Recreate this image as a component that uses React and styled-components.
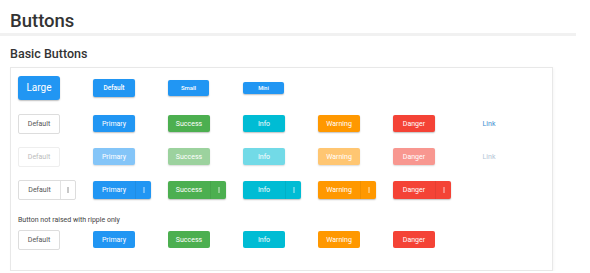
import React from 'react';
import styled, { createGlobalStyle, css } from 'styled-components';

const GlobalStyle = createGlobalStyle`
  body {
    margin: 0;
    background: #fff;
    font-family: Roboto, "Liberation Sans", sans-serif;
  }
`;

const colors = {
  primary: '#2196f3',
  success: '#4caf50',
  info: '#00bcd4',
  warning: '#ff9800',
  danger: '#f44336',
};

const sizes = {
  large: { w: 42, h: 24, fs: 10, r: 3, fw: 400 },
  normal: { w: 42, h: 18, fs: 6.5, r: 2, fw: 500 },
  small: { w: 41, h: 16, fs: 6, r: 2, fw: 500 },
  mini: { w: 41, h: 12, fs: 5.5, r: 2, fw: 500 },
  base: { w: 42, h: 17, fs: 7, r: 2, fw: 400 },
};

const Page = styled.div`
  width: 576px;
`;

const Title = styled.h1`
  margin: 12px 0 0;
  padding: 0 0 2px 10px;
  font-size: 18.5px;
  line-height: 19px;
  font-weight: 500;
  color: #333;
  border-bottom: 3px solid #f1f1f1;
`;

const SectionTitle = styled.h2`
  margin: 12px 0 0 10px;
  font-size: 12.5px;
  line-height: 12.5px;
  font-weight: 500;
  color: #333;
`;

const Panel = styled.div`
  margin: 6px 0 0 10px;
  width: 543px;
  height: 204px;
  box-sizing: border-box;
  border: 1px solid #e8e8e8;
  box-shadow: 1px 1px 3px rgba(0, 0, 0, 0.04);
  padding: 8px 0 0 7px;
  display: flex;
  flex-direction: column;
  gap: 14px;
`;

const Row = styled.div`
  display: grid;
  grid-template-columns: repeat(7, 75px);
  align-items: center;
  height: ${(p) => p.$h || 19}px;
`;

const Group = styled.div`
  display: flex;
  flex-direction: column;
  gap: 5px;
  margin-top: 3px;
`;

const Caption = styled.div`
  font-size: 7px;
  line-height: 9px;
  color: #444;
`;

const Btn = styled.button`
  box-sizing: border-box;
  width: ${(p) => sizes[p.$size].w}px;
  height: ${(p) => sizes[p.$size].h}px;
  font-family: Roboto, "Liberation Sans", sans-serif;
  font-size: ${(p) => sizes[p.$size].fs}px;
  font-weight: ${(p) => sizes[p.$size].fw};
  border-radius: ${(p) => sizes[p.$size].r}px;
  padding: 0;
  border: none;
  display: flex;
  align-items: center;
  justify-content: center;
  color: #fff;
  background: ${(p) => colors[p.$variant]};
  opacity: ${(p) => (p.$off ? 0.55 : 1)};
  box-shadow: ${(p) => (p.$flat ? 'none' : '0 1px 1.5px rgba(0,0,0,0.25)')};
`;

const OutlineBtn = styled.button`
  box-sizing: border-box;
  width: 42px;
  height: 20px;
  padding: 0;
  font-family: Roboto, "Liberation Sans", sans-serif;
  font-size: 7px;
  background: #fff;
  border: 1px solid ${(p) => (p.$off ? '#eeeeee' : '#dddddd')};
  border-radius: 2px;
  color: ${(p) => (p.$off ? '#bbbbbb' : '#555')};
`;

const LinkBtn = styled.span`
  width: 42px;
  text-align: center;
  font-size: 7px;
  color: ${(p) => (p.$off ? '#b3c6d6' : '#3d8fd1')};
`;

const Split = styled.div`
  display: flex;
  width: 58px;
  height: ${(p) => (p.$outline ? 20 : 18)}px;
  box-sizing: border-box;
  border-radius: 2px;
  background: ${(p) => (p.$outline ? '#fff' : colors[p.$variant])};
  color: ${(p) => (p.$outline ? '#555' : '#fff')};
  font-size: 7px;
  ${(p) =>
    p.$outline
      ? css`
          border: 1px solid #dddddd;
        `
      : css`
          box-shadow: 0 1px 1.5px rgba(0, 0, 0, 0.25);
        `}
`;

const SplitMain = styled.span`
  flex: 0 0 ${(p) => (p.$outline ? 41 : 42)}px;
  display: flex;
  align-items: center;
  justify-content: center;
`;

const SplitToggle = styled.span`
  flex: 1;
  display: flex;
  align-items: center;
  justify-content: center;
  border-left: 1px solid ${(p) => (p.$outline ? '#e2e2e2' : 'rgba(0,0,0,0.06)')};
`;

const Dots = ({ color }) => (
  <svg width="2" height="6" viewBox="0 0 2 6">
    <circle cx="1" cy="1" r="0.7" fill={color} />
    <circle cx="1" cy="3" r="0.7" fill={color} />
    <circle cx="1" cy="5" r="0.7" fill={color} />
  </svg>
);

const variants = ['primary', 'success', 'info', 'warning', 'danger'];
const labels = {
  primary: 'Primary',
  success: 'Success',
  info: 'Info',
  warning: 'Warning',
  danger: 'Danger',
};

const App = () => (
  <>
    <GlobalStyle />
    <Page>
      <Title>Buttons</Title>
      <SectionTitle>Basic Buttons</SectionTitle>
      <Panel>
        <Row $h={24}>
          <Btn $variant="primary" $size="large">Large</Btn>
          <Btn $variant="primary" $size="normal">Default</Btn>
          <Btn $variant="primary" $size="small">Small</Btn>
          <Btn $variant="primary" $size="mini">Mini</Btn>
        </Row>
        <Row>
          <OutlineBtn>Default</OutlineBtn>
          {variants.map((v) => (
            <Btn key={v} $variant={v} $size="base">{labels[v]}</Btn>
          ))}
          <LinkBtn>Link</LinkBtn>
        </Row>
        <Row>
          <OutlineBtn $off>Default</OutlineBtn>
          {variants.map((v) => (
            <Btn key={v} $variant={v} $size="base" $off>{labels[v]}</Btn>
          ))}
          <LinkBtn $off>Link</LinkBtn>
        </Row>
        <Row>
          <Split $outline>
            <SplitMain $outline>Default</SplitMain>
            <SplitToggle $outline><Dots color="#666" /></SplitToggle>
          </Split>
          {variants.map((v) => (
            <Split key={v} $variant={v}>
              <SplitMain>{labels[v]}</SplitMain>
              <SplitToggle><Dots color="#fff" /></SplitToggle>
            </Split>
          ))}
        </Row>
        <Group>
          <Caption>Button not raised with ripple only</Caption>
          <Row>
            <OutlineBtn>Default</OutlineBtn>
            {variants.map((v) => (
              <Btn key={v} $variant={v} $size="base" $flat>{labels[v]}</Btn>
            ))}
          </Row>
        </Group>
      </Panel>
    </Page>
  </>
);

export default App;
